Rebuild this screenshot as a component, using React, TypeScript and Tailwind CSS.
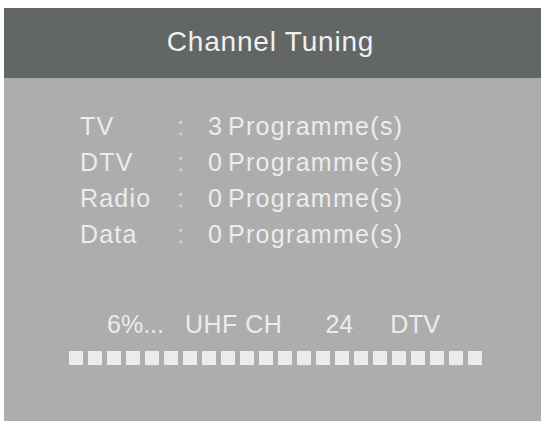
const rows = [
  { label: "TV", count: 3 },
  { label: "DTV", count: 0 },
  { label: "Radio", count: 0 },
  { label: "Data", count: 0 },
];

const squares = Array.from({ length: 22 }, (_, i) => i);

export default function App() {
  return (
    <div className="w-[545px] h-[424px] bg-white pt-[8px] pl-[4px] font-['Liberation_Sans',Arial,sans-serif]">
      <div className="w-[537px] h-[413px] bg-[#adadad] flex flex-col">
        <div className="h-[70px] bg-[#626665] flex items-center justify-center">
          <h1 className="text-[28px] leading-none tracking-[0.8px] text-[#f0f0f0] pb-[2px] pr-[4px]">
            Channel Tuning
          </h1>
        </div>

        <div className="pt-[30px] pl-[76px] text-[25px] leading-[36px] text-[#ececec]">
          {rows.map((row) => (
            <div key={row.label} className="flex">
              <span className="w-[97px] tracking-[1.2px]">{row.label}</span>
              <span className="w-[31px] text-[#d4d4d4]">:</span>
              <span className="w-[20px]">{row.count}</span>
              <span className="tracking-[1.3px]">Programme(s)</span>
            </div>
          ))}
        </div>

        <div className="mt-[54px] pl-[103px] flex text-[25px] leading-[36px] text-[#ececec]">
          <span>6%...</span>
          <span className="ml-[21px] tracking-[0.5px]">UHF CH</span>
          <span className="ml-[43px]">24</span>
          <span className="ml-[37px]">DTV</span>
        </div>

        <div className="mt-[9px] pl-[65px] flex gap-[5px]">
          {squares.map((i) => (
            <div key={i} className="w-[14px] h-[14px] bg-[#ebebeb]" />
          ))}
        </div>
      </div>
    </div>
  );
}
